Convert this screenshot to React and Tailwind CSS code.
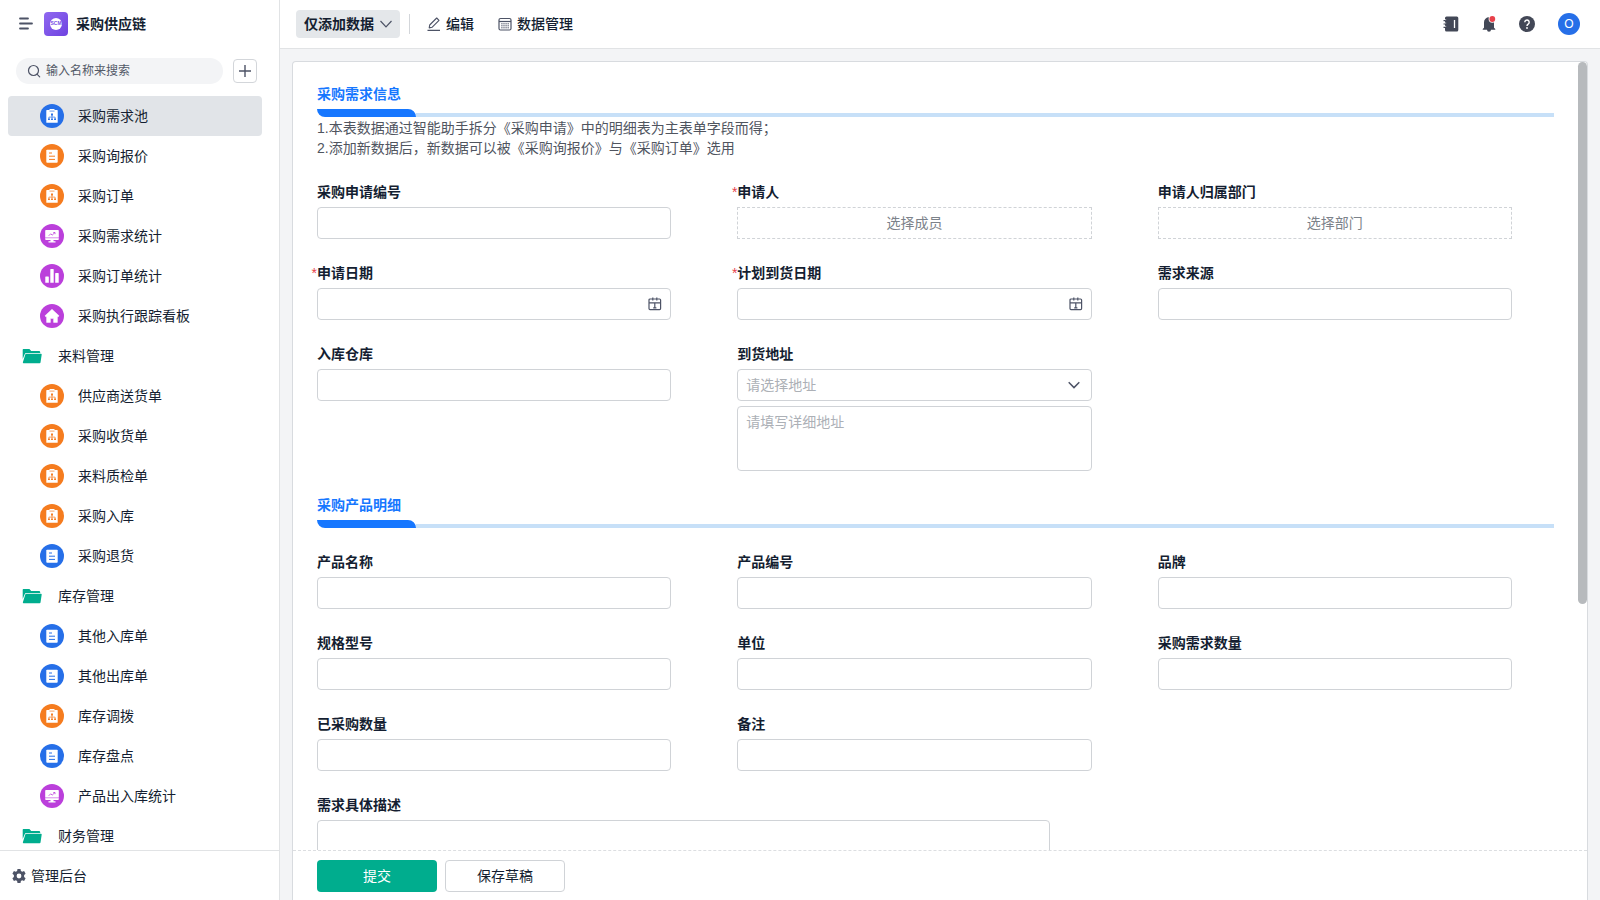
import { useId } from "react";

const GROUPS = [
  {
    title: null,
    items: [
      ["采购需求池", "flow", "blue", true],
      ["采购询报价", "doc", "orange"],
      ["采购订单", "flow", "orange"],
      ["采购需求统计", "monitor", "purple"],
      ["采购订单统计", "bars", "purple"],
      ["采购执行跟踪看板", "home", "purple"],
    ],
  },
  {
    title: "来料管理",
    items: [
      ["供应商送货单", "flow", "orange"],
      ["采购收货单", "flow", "orange"],
      ["来料质检单", "flow", "orange"],
      ["采购入库", "flow", "orange"],
      ["采购退货", "doc", "blue"],
    ],
  },
  {
    title: "库存管理",
    items: [
      ["其他入库单", "doc", "blue"],
      ["其他出库单", "doc", "blue"],
      ["库存调拨", "flow", "orange"],
      ["库存盘点", "doc", "blue"],
      ["产品出入库统计", "monitor", "purple"],
    ],
  },
  { title: "财务管理", items: [] },
];

const FILLS = { blue: "#266fe8", orange: "#f57c1f", purple: "#bb3fdb" };

function EntryGlyph({ kind, color }) {
  if (kind === "flow")
    return (
      <>
        <path d="M6.900 6H9.500V5h5v1h2.600a.6.600 0 0 1 .6.600v11.600a.6.600 0 0 1-.6.600H6.900a.6.600 0 0 1-.6-.6V6.600A.6.600 0 0 1 6.900 6z" fill="#fff" />
        <path d="M9.500 7.100h5" stroke={color} strokeWidth="0.700" />
        <path d="M12 10.500v4M8.900 14.800v-1.700h6.200v1.700" stroke={color} strokeWidth="0.700" fill="none" />
        <path d="M11 9.500h2v1.900h-2zM8 14.400h1.900v1.700H8zM11.050 14.400h1.900v1.700h-1.900zM14.100 14.400H16v1.700h-1.900z" fill={color} />
      </>
    );
  if (kind === "doc")
    return (
      <>
        <rect x="6.300" y="5.700" width="11.400" height="13" rx="0.900" fill="#fff" />
        <path d="M9 9h3M9 12.200h6M9 15.400h6" stroke={color} strokeWidth="1" />
      </>
    );
  if (kind === "monitor")
    return (
      <>
        <path d="M6 6h12a.8.800 0 0 1 .8.800v8.400a.8.800 0 0 1-.8.800h-4.500v1.200h2v1.200h-7v-1.200h2V16H6a.8.800 0 0 1-.8-.8V6.800A.8.800 0 0 1 6 6z" fill="#fff" />
        <path d="M5 13.800h14" stroke={color} strokeWidth="0.600" />
        <path d="M8.700 11.800l2-2 1.500 1.300 2.600-2.500M13.300 8.500h1.700v1.700" stroke={color} strokeWidth="0.800" fill="none" />
      </>
    );
  if (kind === "bars")
    return (
      <path d="M5.700 12.500h2.700a.4.400 0 0 1 .4.400v5.800H5.300v-5.800a.4.400 0 0 1 .4-.4zM10.700 5h2.600a.4.400 0 0 1 .4.400v13.300h-3.400V5.400a.4.400 0 0 1 .4-.4zM15.600 9h2.700a.4.400 0 0 1 .4.400v9.300h-3.500V9.400a.4.400 0 0 1 .4-.4z" fill="#fff" />
    );
  return (
    <path d="M12 5.300l7 6.500-.7.900h-.9v5.700h-3.800v-4h-3.200v4H6.600v-5.700h-.9l-.7-.9z" fill="#fff" stroke="#fff" strokeWidth="0.500" strokeLinejoin="round" />
  );
}

function EntryIcon({ kind, tone }) {
  const color = FILLS[tone];
  return (
    <svg viewBox="0 0 24 24" className="size-6 shrink-0" aria-hidden="true">
      <circle cx="12" cy="12" r="12" fill={color} />
      <EntryGlyph kind={kind} color={color} />
    </svg>
  );
}

function FolderIcon() {
  return (
    <svg viewBox="0 0 20 16" className="h-4 w-5 shrink-0" aria-hidden="true">
      <path d="M1.400 1h6l1.800 1.900h7.800a1.200 1.200 0 0 1 1.200 1.200V5H4.200a1.500 1.500 0 0 0-1.400 1L.7 11V1.700A.7.700 0 0 1 1.400 1z" fill="#00ad8e" />
      <path d="M4.300 5.700H19a.7.700 0 0 1 .7.800l-1.200 7.900a.9.900 0 0 1-.9.800H1.600a.7.700 0 0 1-.7-.9L3.300 6.400a1 1 0 0 1 1-.7z" fill="#00ad8e" />
    </svg>
  );
}

function Sidebar() {
  return (
    <aside className="flex w-[280px] shrink-0 flex-col border-r border-[#e1e3e5] bg-white">
      <div className="flex h-12 shrink-0 items-center px-4">
        <button type="button" aria-label="收起菜单" className="flex w-7 items-center pl-0.5">
          <svg viewBox="0 0 16 16" className="size-4" fill="none" stroke="#4d5366" strokeWidth="1.800" strokeLinecap="round">
            <path d="M2 2.500h8M2 7.500h12M2 12.500h8" />
          </svg>
        </button>
        <span className="flex size-6 items-center justify-center rounded bg-linear-to-br from-[#9068f0] to-[#6f42e0]">
          <span className="flex size-3 items-center justify-center rounded-full bg-white font-['Liberation_Sans'] text-[5px] font-bold text-[#7a4de6]">SCM</span>
        </span>
        <h1 className="ml-2 text-sm font-bold">采购供应链</h1>
      </div>
      <div className="flex h-12 shrink-0 items-start gap-2.5 px-4 pt-2.5">
        <label className="flex h-[26px] w-[207px] items-center gap-[5px] rounded-full bg-[#f3f4f6] pl-[11px]">
          <svg viewBox="0 0 14 14" className="size-3.5 shrink-0" fill="none" stroke="#4d5366" strokeWidth="1.200" strokeLinecap="round">
            <circle cx="6.500" cy="6.500" r="5" />
            <path d="M10.200 10.400l2.500 2.500" />
          </svg>
          <input aria-label="搜索" placeholder="输入名称来搜索" className="w-40 bg-transparent text-xs outline-none placeholder:text-[#525967]" />
        </label>
        <button type="button" aria-label="新建" className="mt-px flex size-6 items-center justify-center rounded border border-[#d3d6da]">
          <svg viewBox="0 0 12 12" className="size-3" stroke="#4d5366" strokeWidth="1.400">
            <path d="M6 0v12M0 6h12" />
          </svg>
        </button>
      </div>
      <nav className="min-h-0 flex-1 overflow-y-auto pr-[17px] pl-2 [scrollbar-width:none]">
        {GROUPS.map((group, i) => (
          <section key={i}>
            {group.title && (
              <button type="button" className="flex h-10 w-full items-center gap-4 pl-3.5">
                <FolderIcon />
                <span>{group.title}</span>
              </button>
            )}
            {group.items.map(([name, kind, tone, active]) => (
              <a
                key={name}
                href="#"
                aria-current={active ? "page" : undefined}
                className={
                  active
                    ? "flex h-10 items-center gap-3.5 rounded bg-[#e1e4e8] pl-8"
                    : "flex h-10 items-center gap-3.5 rounded pl-8"
                }
              >
                <EntryIcon kind={kind} tone={tone} />
                <span>{name}</span>
              </a>
            ))}
          </section>
        ))}
      </nav>
      <button type="button" className="flex h-[50px] shrink-0 items-center gap-[5px] border-t border-[#e1e3e5] pl-3">
        <svg viewBox="0 0 14 14" className="size-3.5" aria-hidden="true">
          <path
            fillRule="evenodd"
            fill="#4d5366"
            d="M5.500 0h3l.4 1.900 1.300.8 1.900-.6 1.500 2.600-1.500 1.300v2l1.500 1.300-1.500 2.600-1.900-.6-1.300.8L8.500 14h-3l-.4-1.900-1.300-.8-1.900.6L.4 9.300 1.900 8V6L.4 4.700l1.500-2.600 1.900.6 1.300-.8zM7 4.600a2.400 2.400 0 1 0 0 4.800 2.400 2.400 0 0 0 0-4.800z"
          />
        </svg>
        <span>管理后台</span>
      </button>
    </aside>
  );
}

function Topbar() {
  return (
    <header className="flex h-[49px] shrink-0 items-center border-b border-[#e1e3e5] bg-white pr-5 pl-4">
      <button type="button" className="flex h-7 items-center gap-1.5 rounded bg-[#e4e7ea] px-2 font-bold">
        仅添加数据
        <svg viewBox="0 0 12 8" className="h-2 w-3" fill="none" stroke="#4d5366" strokeWidth="1.200">
          <path d="M.5 1L6 6.800 11.500 1" />
        </svg>
      </button>
      <span className="mx-[9px] h-5 w-px bg-[#d3d6da]" />
      <button type="button" className="ml-2 flex items-center gap-[5px] font-medium">
        <svg viewBox="0 0 14 14" className="size-3.5" fill="none" stroke="#4d5366" strokeWidth="1.100" strokeLinejoin="round">
          <path d="M.5 13.400h12.500M2.200 10.900l.5-2.900 7-7 2.300 2.300-7 7z" />
        </svg>
        编辑
      </button>
      <button type="button" className="ml-6 flex items-center gap-[5px] font-medium">
        <svg viewBox="0 0 14 14" className="size-3.5" fill="none" stroke="#4d5366" strokeWidth="1.200">
          <rect x="1" y="1.500" width="12" height="11.500" rx="1.500" />
          <path d="M1 4.500h12" />
          <path d="M3.200 6.800h7.800M3.200 8.800h7.800M3.200 10.800h7.800" strokeWidth="1" strokeDasharray="1.400 0.700" />
        </svg>
        数据管理
      </button>
      <div className="ml-auto flex items-center">
        <button type="button" aria-label="通讯录">
          <svg viewBox="0 0 16 16" className="size-4">
            <path d="M3.500.5h10.300a1.500 1.500 0 0 1 1.500 1.500v12a1.500 1.500 0 0 1-1.500 1.500H3.500A1.500 1.500 0 0 1 2 14V2A1.500 1.500 0 0 1 3.500.5z" fill="#434857" />
            <path d="M.5 4.700h2.500M.5 8h2.500M.5 11.300h2.500" stroke="#434857" strokeWidth="1.200" />
            <path d="M2 3.700h1.200M2 7h1.200M2 10.300h1.200" stroke="#fff" strokeWidth="0.700" />
            <path d="M11.500 4v8" stroke="#fff" strokeWidth="1.300" />
          </svg>
        </button>
        <button type="button" aria-label="消息" className="ml-[22px]">
          <svg viewBox="0 0 16 16" className="size-4">
            <path d="M8 1.300a5 5 0 0 1 5 5v5.500l1.300 1.300v.7H10a2 2 0 0 1-4 0H1.700v-.7L3 11.800V6.300a5 5 0 0 1 5-5z" fill="#434857" />
            <circle cx="11.300" cy="3" r="3.700" fill="#fff" />
            <circle cx="11.300" cy="3" r="2.900" fill="#e8414b" />
          </svg>
        </button>
        <button type="button" aria-label="帮助" className="ml-[22px]">
          <svg viewBox="0 0 16 16" className="size-4">
            <circle cx="8" cy="8" r="8" fill="#434857" />
            <path d="M5.800 6.300a2.200 2.200 0 1 1 3.500 1.700c-.8.600-1.300.9-1.300 1.900" fill="none" stroke="#fff" strokeWidth="1.400" />
            <circle cx="8" cy="12" r="0.900" fill="#fff" />
          </svg>
        </button>
        <button type="button" aria-label="账户" className="ml-[23px] flex size-[22px] items-center justify-center rounded-full bg-[#266fe8] font-['Liberation_Sans'] text-xs text-white">
          O
        </button>
      </div>
    </header>
  );
}

function CalendarIcon() {
  return (
    <svg viewBox="0 0 14 14" className="size-3.5 shrink-0" fill="none" stroke="#4d5366" strokeWidth="1.200" aria-hidden="true">
      <rect x="1" y="2" width="11.600" height="10.600" rx="1" />
      <path d="M1 5.800h11.600M4.800.6v3M8.800.6v3M6.800 5.800v5.200M5.200 10.900h3.200" />
    </svg>
  );
}

function SectionTitle({ children }) {
  return (
    <div>
      <h2 className="mb-[5px] leading-5 font-bold text-[#1677ff]">{children}</h2>
      <div className="flex h-2 items-end">
        <span className="h-2 w-[99px] shrink-0 rounded-tr-lg rounded-bl-lg bg-[#1677ff]" />
        <span className="h-1 flex-1 bg-[#c7e0f8]" />
      </div>
    </div>
  );
}

const BOX = "w-full rounded border border-[#d0d3d7] bg-white px-2 outline-none placeholder:text-[#acb0b6]";

function Field({ label, type = "text", required, hint, wide }) {
  const id = useId();
  return (
    <div className={wide ? "col-span-2 mr-[42px]" : ""}>
      <label htmlFor={id} className="relative mb-[5px] block leading-5 font-bold">
        {required && <span className="absolute right-full font-['Liberation_Sans'] text-sm font-normal text-[#e8414b]">*</span>}
        {label}
      </label>
      {type === "text" && <input id={id} className={`${BOX} block h-8`} />}
      {type === "pick" && (
        <button id={id} type="button" className="block h-8 w-full border border-dashed border-[#d0d3d7] text-[#7c828a]">
          {hint}
        </button>
      )}
      {type === "date" && (
        <div className="flex h-8 w-full items-center rounded border border-[#d0d3d7] px-2">
          <input id={id} className="min-w-0 flex-1 outline-none" />
          <CalendarIcon />
        </div>
      )}
      {type === "address" && (
        <div className="grid gap-[5px]">
          <div className="relative">
            <select id={id} defaultValue="" className={`${BOX} block h-8 appearance-none text-[#acb0b6]`}>
              <option value="">请选择地址</option>
            </select>
            <svg viewBox="0 0 12 8" className="pointer-events-none absolute top-3 right-3 h-2 w-3" fill="none" stroke="#4d5366" strokeWidth="1.500">
              <path d="M.7 1.200L6 6.600 11.300 1.200" />
            </svg>
          </div>
          <textarea aria-label="详细地址" placeholder="请填写详细地址" className={`${BOX} block h-[65px] resize-none py-[5px] leading-5`} />
        </div>
      )}
      {type === "area" && <textarea id={id} className={`${BOX} block h-24 resize-none`} />}
    </div>
  );
}

function FieldGrid({ children }) {
  return <div className="grid grid-cols-3 gap-x-[66px] gap-y-6 pr-[42px]">{children}</div>;
}

export default function App() {
  return (
    <div className="flex h-screen bg-[#f3f4f6] font-['Liberation_Sans','Noto_Sans_CJK_SC',sans-serif] text-sm text-[#141e31]">
      <Sidebar />
      <div className="flex min-w-0 flex-1 flex-col">
        <Topbar />
        <main className="relative mx-3 mt-3 flex min-h-0 flex-1 flex-col rounded-t border border-b-0 border-[#d8dbdf] bg-white">
          <form id="entry" className="flex min-h-0 flex-1 flex-col gap-6 overflow-y-auto pt-[22px] pr-[33px] pb-6 pl-6 [scrollbar-width:none]">
            <div>
              <SectionTitle>采购需求信息</SectionTitle>
              <div className="mt-px leading-5 text-[#50555f]">
                <p>1.本表数据通过智能助手拆分《采购申请》中的明细表为主表单字段而得；</p>
                <p>2.添加新数据后，新数据可以被《采购询报价》与《采购订单》选用</p>
              </div>
            </div>
            <FieldGrid>
              <Field label="采购申请编号" />
              <Field label="申请人" type="pick" required hint="选择成员" />
              <Field label="申请人归属部门" type="pick" hint="选择部门" />
              <Field label="申请日期" type="date" required />
              <Field label="计划到货日期" type="date" required />
              <Field label="需求来源" />
              <Field label="入库仓库" />
              <Field label="到货地址" type="address" />
            </FieldGrid>
            <SectionTitle>采购产品明细</SectionTitle>
            <FieldGrid>
              <Field label="产品名称" />
              <Field label="产品编号" />
              <Field label="品牌" />
              <Field label="规格型号" />
              <Field label="单位" />
              <Field label="采购需求数量" />
              <Field label="已采购数量" />
              <Field label="备注" />
              <div />
              <Field label="需求具体描述" type="area" wide />
            </FieldGrid>
          </form>
          <div className="flex h-[50px] shrink-0 items-center gap-2 border-t border-dashed border-[#dcdee1] pl-6">
            <button type="submit" form="entry" className="h-8 w-[120px] rounded bg-[#00ad8e] text-white">提交</button>
            <button type="button" className="h-8 w-[120px] rounded border border-[#d0d3d7]">保存草稿</button>
          </div>
          <span className="absolute top-0 right-0 h-[542px] w-[9px] rounded-full bg-[#b7babd]" />
        </main>
      </div>
    </div>
  );
}
